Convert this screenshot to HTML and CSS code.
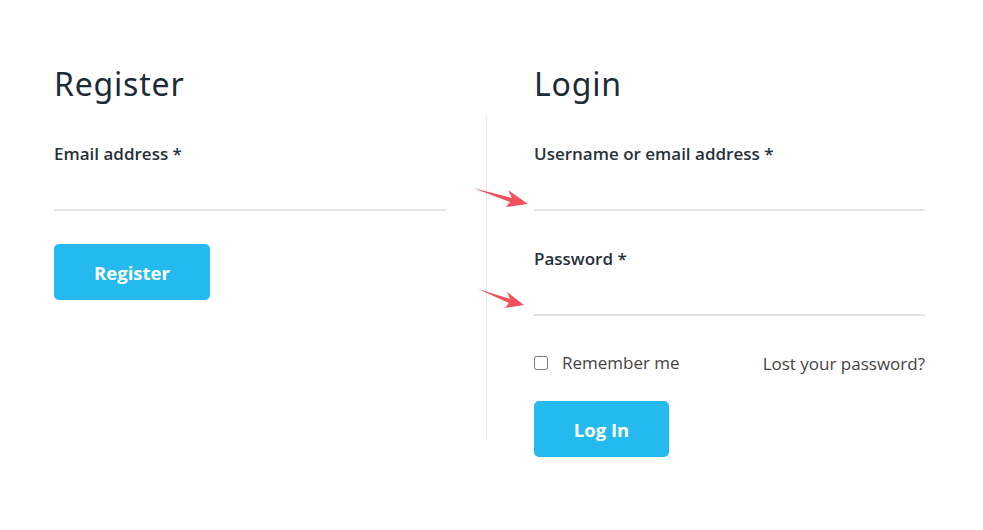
FILE: index.html
```html
<!DOCTYPE html>
<html lang="en">
<head>
  <meta charset="UTF-8">
  <meta name="viewport" content="width=device-width, initial-scale=1">
  <title>My account</title>
  <link rel="stylesheet" href="styles.css">
</head>
<body>
  <div class="cuentas">
    <section class="col">
      <h2>Register</h2>
      <form>
        <label for="reg_email">Email address *</label>
        <input type="email" id="reg_email" class="campo">
        <button type="button" class="boton boton-reg">Register</button>
      </form>
    </section>

    <div class="divisor"></div>

    <section class="col col-login">
      <h2>Login</h2>
      <form>
        <div class="fila-campo">
          <svg class="flecha f1" width="60" height="26" viewBox="0 0 60 26"><polygon points="0,3 39,13 35,5 55,19 33,22 37,17" fill="#f2505c"/></svg>
          <label for="username">Username or email address *</label>
          <input type="text" id="username" class="campo">
        </div>
        <div class="fila-campo">
          <svg class="flecha f2" width="50" height="26" viewBox="0 0 50 26"><polygon points="0,2 32,12 29,5 46,18 27,21 31,16" fill="#f2505c"/></svg>
          <label for="password">Password *</label>
          <input type="password" id="password" class="campo">
        </div>
        <div class="recordar">
          <label class="check"><input type="checkbox"> <span>Remember me</span></label>
          <a href="#" class="perdida">Lost your password?</a>
        </div>
        <button type="button" class="boton boton-log">Log In</button>
      </form>
    </section>
  </div>
</body>
</html>
```

FILE: styles.css
```css
body {
  margin: 0;
  background: #fff;
  font-family: "Open Sans", sans-serif;
  color: #1c2b36;
}
.cuentas {
  display: flex;
  align-items: flex-start;
  padding: 64px 0 0 54px;
}
.col {
  width: 392px;
}
.col-login {
  width: 391px;
  margin-left: 47px;
}
.divisor {
  width: 1px;
  height: 325px;
  margin: 51px 0 0 40px;
  background: #ececec;
}
h2 {
  margin: 0;
  font-family: "Noto Sans", sans-serif;
  font-weight: 400;
  font-size: 32px;
  line-height: 40px;
  letter-spacing: 0.8px;
  color: #1c2b36;
}
form label {
  display: block;
  font-size: 17px;
  font-weight: 600;
  line-height: 24px;
  color: #25323c;
}
form > label,
.fila-campo {
  margin-top: 38px;
}
.fila-campo + .fila-campo {
  margin-top: 36px;
}
.fila-campo {
  position: relative;
}
.campo {
  display: block;
  width: 100%;
  box-sizing: border-box;
  height: 45px;
  border: none;
  border-bottom: 2px solid #e2e2e2;
  outline: none;
  font-family: inherit;
  font-size: 16px;
  padding: 0;
}
.flecha {
  position: absolute;
}
.f1 {
  left: -61px;
  top: 43px;
}
.f2 {
  left: -56px;
  top: 40px;
}
.boton {
  display: block;
  border: none;
  border-radius: 5px;
  background: #25baef;
  color: #fff;
  font-family: "Open Sans", sans-serif;
  font-weight: 700;
  font-size: 18.5px;
  height: 56px;
  cursor: pointer;
}
.boton-reg {
  width: 156px;
  margin-top: 33px;
}
.boton-log {
  width: 135px;
  margin-top: 26px;
}
.recordar {
  display: flex;
  justify-content: space-between;
  align-items: center;
  margin-top: 35px;
  height: 24px;
  font-size: 17px;
  color: #444;
}
.check {
  display: flex;
  align-items: center;
  font-size: 17px;
  font-weight: 400;
  color: #444;
}
.check input {
  margin: 0 14px 0 0;
  width: 14px;
  height: 14px;
}
.perdida {
  color: #444;
  text-decoration: none;
}
```
